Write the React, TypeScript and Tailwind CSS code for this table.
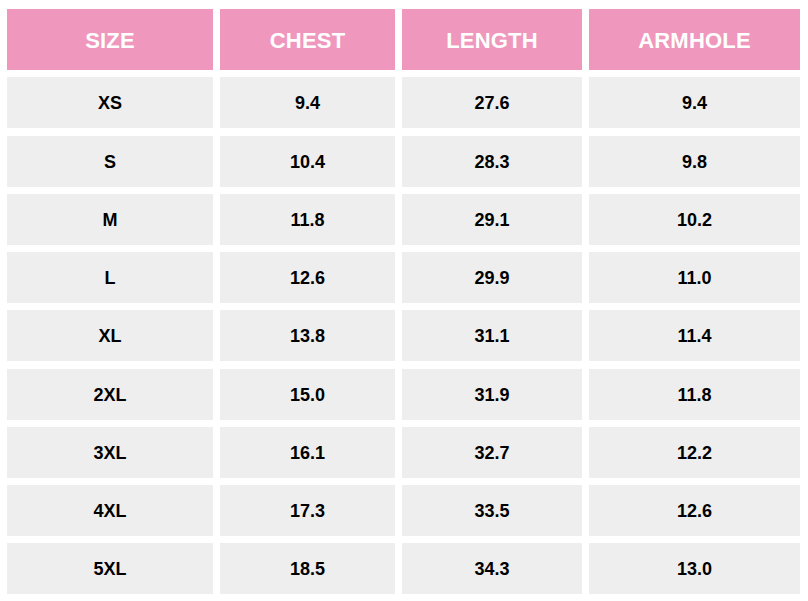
import React from 'react';

const headers = ['SIZE', 'CHEST', 'LENGTH', 'ARMHOLE'];

const rows: string[][] = [
  ['XS', '9.4', '27.6', '9.4'],
  ['S', '10.4', '28.3', '9.8'],
  ['M', '11.8', '29.1', '10.2'],
  ['L', '12.6', '29.9', '11.0'],
  ['XL', '13.8', '31.1', '11.4'],
  ['2XL', '15.0', '31.9', '11.8'],
  ['3XL', '16.1', '32.7', '12.2'],
  ['4XL', '17.3', '33.5', '12.6'],
  ['5XL', '18.5', '34.3', '13.0'],
];

const App: React.FC = () => {
  return (
    <div className="w-[808px] h-[601px] bg-white pt-[9px] pl-[7px] font-['Liberation_Sans',Arial,sans-serif]">
      <div className="grid grid-cols-[206px_175px_180px_211px] grid-rows-[61px_repeat(9,51px)] gap-x-[7px] gap-y-[7.25px]">
        {headers.map((h) => (
          <div key={h} className="flex items-center justify-center pt-[2px] bg-[#ef97bd] text-white font-bold text-[22px] tracking-[0.2px]">
            {h}
          </div>
        ))}
        {rows.map((row) =>
          row.map((cell, i) => (
            <div key={row[0] + i} className="flex items-center justify-center pt-[2px] bg-[#eeeeee] text-black font-bold text-[18px]">
              {cell}
            </div>
          ))
        )}
      </div>
    </div>
  );
};

export default App;
